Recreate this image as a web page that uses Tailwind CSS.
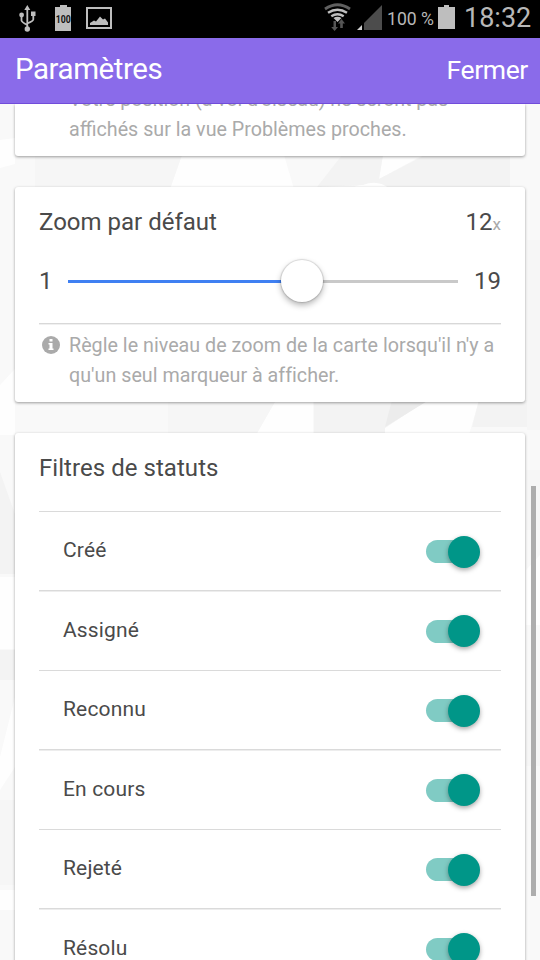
<!DOCTYPE html>
<html lang="fr">
<head>
<meta charset="utf-8">
<title>Paramètres</title>
<script src="https://cdn.jsdelivr.net/npm/@tailwindcss/browser@4"></script>
</head>
<body class="w-[540px] h-[960px] overflow-hidden flex flex-col bg-[#f9f9f9] font-['Roboto',sans-serif] text-[#4a4a4a]">
<div class="h-[38px] shrink-0 bg-black flex items-center text-[#b8b8b8]">
  <svg class="w-[320px] h-[38px]" viewBox="0 0 320 38">
    <g fill="none" stroke="#bebebe" stroke-width="1.800"><path d="M27.300 8v20M21.500 16v4.500q0 1.500 5.800 4.500M33.300 15v4.500q0 1.500-6 4"/></g>
    <g fill="#bebebe"><path d="M27.300 5l3 5h-6zM31 11.500h4.500v4.500H31z"/><circle cx="21.600" cy="15" r="2.400"/><circle cx="27.300" cy="29" r="2.700"/>
    <path d="M60 5h7v2h4v24H55V7h5z"/></g>
    <text x="63.300" y="23" text-anchor="middle" font-family="Roboto" font-size="10" font-weight="700" textLength="15" lengthAdjust="spacingAndGlyphs" fill="#111">100</text>
    <path fill="#bebebe" fill-rule="evenodd" d="M86 7h26v22H86zM88 9v18h22V9z"/>
    <path fill="#bebebe" d="M90 25v-2l4-2.500 2 1 4-5 3 3 2-1 3 4V25z"/>
  </svg>
  <svg class="w-[64px] h-[38px]" viewBox="320 0 64 38" fill="none">
    <path d="M325 9q12.500-8.500 25 0" stroke="#606060" stroke-width="2.800"/>
    <path d="M328 12.700q9.500-6 19 0M331.300 16.200q6.200-3.800 12.400 0" stroke="#bebebe" stroke-width="2.500"/>
    <path d="M333.500 18q4-2.500 8 0l-4 4z" fill="#bebebe"/>
    <path d="M333.500 21h2.500v6h2l-3.400 4-3.400-4h2.300zM341.500 19l3.500 4.500h-2.200V28h-2.600v-4.500H338z" fill="#555"/>
    <path d="M382 5v25h-18v-7z" fill="#4c4c4c"/><path d="M362 25v5h-5z" fill="#d0d0d0"/>
  </svg>
  <span class="w-[54px] pl-[3px] text-[17.600px] whitespace-nowrap">100 %</span>
  <svg class="w-[17px] h-[38px]" viewBox="438 0 17 38" fill="#bebebe"><path d="M444 5h5v2h6v22h-17V7h6z"/></svg>
  <span class="pl-[9px] pb-[2px] text-[27px] whitespace-nowrap">18:32</span>
</div>
<header class="h-[66px] shrink-0 bg-[#8a6bea] border-b border-[#714cda] flex items-center justify-between pl-[15px] pr-[12px] text-white">
  <h1 class="text-[29.500px] leading-[36px] pb-[3px] tracking-[-0.450px]">Paramètres</h1>
  <span class="text-[26.500px] leading-[34px] pb-[2px] tracking-[-0.350px]">Fermer</span>
</header>
<main class="relative flex-1 min-h-0 overflow-hidden">
  <svg class="absolute inset-0" width="540" height="856" viewBox="0 104 540 856">
    <path fill="#fefefe" d="M0 140l15-2v26L0 168zM182 155l-12 34h124l-10-34zM383 155h40l-44 24zM350 189q27-14 40 0zM0 385l15-16v66H0zM276 400h37v35h-57zM385 428l42-28h52l-10 35h-84zM0 577h15v72H0zM526 570l14-15v70h-14zM0 757l15-60v70L0 790zM0 890h15v20H0z"/>
    <path fill="#f3f3f3" d="M317 187l25-32h41l-4 24 46-24h85v34h-120q-12-10-27-4zM0 472l15 42v60H0zM314 400h113l-42 28v7h-71zM479 400h50v27h-57zM0 650h15v30H0z"/>
    <path fill="#f6f6f6" d="M35 155h147l-12 34H35zM0 800h15v85H0zM168 400h108l-20 35h-88zM527 240h13v190h-13zM526 470h14v60h-14zM526 710h14v56h-14z"/>
    <path fill="#ececec" d="M392 400h37l-44 27z"/>
  </svg>
  <div class="relative px-[15px] flex flex-col gap-[31px]">
    <section class="h-[52px] bg-white rounded-b-[3px] shadow-[0_1px_3px_rgba(0,0,0,0.38)] flex flex-col justify-end pl-[54px] pb-[11px]">
      <p class="text-[19.700px] leading-[30px] text-[#aaa] whitespace-nowrap"><span class="tracking-[-0.070px]">Votre position (à vol d'oiseau) ne seront pas</span><br>affichés sur la vue Problèmes proches.</p>
    </section>
    <section class="h-[215px] bg-white rounded-[3px] shadow-[0_1px_3px_rgba(0,0,0,0.38)] px-[24px]">
      <div class="h-[70px] flex items-center justify-between text-[24px]">
        <h2>Zoom par défaut</h2><span>12<span class="text-[17px] text-[#aaa]">x</span></span>
      </div>
      <div class="h-[67px] border-b border-[#d8d8d8] shadow-[0_1px_0_#f0f0f0] flex text-[24px]">
        <span class="w-[29px] leading-[48px]">1</span>
        <div class="relative w-[390px] h-[48px] flex items-center">
          <div class="h-[3px] w-[233px] bg-[#3f80f2]"></div><div class="h-[3px] flex-1 bg-[#c9c9c9]"></div>
          <div class="absolute left-[212.500px] top-[2.500px] size-[42px] rounded-full bg-white shadow-[0_0_1px_1px_rgba(0,0,0,0.12),0_3px_6px_rgba(0,0,0,0.3)]"></div>
        </div>
        <span class="flex-1 text-right leading-[48px]">19</span>
      </div>
      <div class="flex pt-[7px] pl-[3px]">
        <svg class="w-[18px] h-[18px] mt-[5px] mr-[9px] shrink-0" viewBox="0 0 18 18"><circle cx="9" cy="9" r="9" fill="#aaa"/><path d="M7.500 3h3v2.500h-3zM6.500 7h4v5.500h1V14h-5v-1.500h1v-4h-1z" fill="#fff"/></svg>
        <p class="text-[19.700px] leading-[30px] tracking-[0.020px] text-[#aaa] whitespace-nowrap">Règle le niveau de zoom de la carte lorsqu'il n'y a<br>qu'un seul marqueur à afficher.</p>
      </div>
    </section>
    <section class="h-[600px] bg-white rounded-[3px] shadow-[0_1px_3px_rgba(0,0,0,0.38)] px-[24px]">
      <h2 class="h-[78px] leading-[70px] text-[24px] tracking-[0.050px]">Filtres de statuts</h2>
      <ul id="filters" class="text-[21px] tracking-[0.150px]"></ul>
    </section>
  </div>
  <div class="absolute right-[4px] top-[382px] w-[5px] h-[410px] bg-[#adadad]"></div>
</main>
<script>
document.getElementById('filters').innerHTML = ['Créé','Assigné','Reconnu','En cours','Rejeté','Résolu'].map((name, i) => `
<li class="${i % 2 ? 'h-[80px] shadow-[inset_0_1px_0_#ededed]' : 'h-[79px]'} border-t border-[#dadada] pl-[24px] pr-[21px] flex items-center justify-between">
  <span class="${i % 2 ? 'pt-[1px]' : 'pb-[1px]'}">${name}</span>
  <span class="relative flex items-center mt-[1px] w-[54px] h-[32px]"><span class="w-[48px] h-[23px] rounded-full bg-[#80cbc4]"></span><span class="absolute right-0 top-0 size-[32px] rounded-full bg-[#009688] shadow-[0_2px_5px_rgba(0,0,0,0.35)]"></span></span>
</li>`).join('');
</script>
</body>
</html>
